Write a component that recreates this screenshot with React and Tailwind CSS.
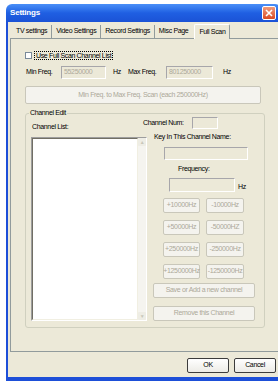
import React from "react";

const TABS = ["TV settings", "Video Settings", "Record Settings", "Misc Page"];

const STEP_BUTTONS = [
  ["+10000Hz", "-10000Hz"],
  ["+50000Hz", "-50000HZ"],
  ["+250000Hz", "-250000Hz"],
  ["+1250000Hz", "-1250000Hz"],
];

const DisabledButton = ({ label, className = "" }) => (
  <div
    className={`flex items-center justify-center rounded-[2px] border border-[#c9c7ba] bg-[#f4f3ee] text-[#aca899] whitespace-nowrap ${className}`}
  >
    {label}
  </div>
);

const SunkenInput = ({ value = "", className = "" }) => (
  <div
    className={`flex items-center border border-t-[#a7a6aa] border-l-[#a7a6aa] border-b-white border-r-white bg-[#ece9d8] pl-[2px] text-[#aca899] ${className}`}
  >
    {value}
  </div>
);

const Tab = ({ label, last }) => (
  <div
    className={`flex h-[13px] items-center px-[4px] ${last ? "" : "border-r border-r-[#919b9c]"}`}
  >
    {label}
  </div>
);

const FullScanPage = () => (
  <div className="ml-[2px] h-[314px] w-[270px] border border-[#919b9c] pl-[14px] pt-[12px]">
    {/* checkbox */}
    <div className="flex h-[8px] items-center">
      <div className="h-[7px] w-[7px] border border-[#7a8a99] bg-white" />
      <span className="ml-[2px] border border-dotted border-black px-[1px] leading-[7px]">
        Use Full Scan Channel List
      </span>
    </div>

    {/* frequency range */}
    <div className="mt-[7px] flex h-[13px] items-center">
      <span className="ml-[1px] w-[35px]">Min Freq.</span>
      <SunkenInput value="55250000" className="h-[13px] w-[45px]" />
      <span className="ml-[7px] w-[15px]">Hz</span>
      <span className="w-[38px]">Max Freq.</span>
      <SunkenInput value="801250000" className="h-[13px] w-[47px]" />
      <span className="ml-[10px]">Hz</span>
    </div>

    <DisabledButton
      label="Min Freq. to Max Freq. Scan (each 250000Hz)"
      className="mt-[7px] h-[18px] w-[236px]"
    />

    {/* channel edit group */}
    <div className="relative mt-[9px] h-[215px] w-[240px] rounded-[3px] border border-[#d0d0bf] pl-[5px] pt-[3px]">
      <span className="absolute left-[3px] top-[-5px] bg-[#ece9d8] px-[1px] leading-[8px]">
        Channel Edit
      </span>
      <div className="flex">
        <div className="w-[116px] pt-[6px]">
          <div className="h-[8px] pl-[1px] leading-[8px]">Channel List:</div>
          <div className="mt-[6px] flex h-[184px] border border-t-[#9d9d9d] border-l-[#9d9d9d] border-b-white border-r-white">
            <div className="flex-1 border border-t-[#716f64] border-l-[#716f64] border-b-[#f1efe2] border-r-[#f1efe2] bg-white" />
            <div className="flex w-[8px] flex-col justify-between bg-[#f5f4ef]">
              <div className="flex h-[8px] items-center justify-center rounded-[1px] bg-[#eeede5] text-[5px] leading-none text-[#c9c7ba]">
                ▲
              </div>
              <div className="flex h-[8px] items-center justify-center rounded-[1px] bg-[#eeede5] text-[5px] leading-none text-[#c9c7ba]">
                ▼
              </div>
            </div>
          </div>
        </div>

        <div className="flex flex-col">
          <div className="ml-[-4px] flex h-[12px] items-center">
            <span className="w-[49px]">Channel Num:</span>
            <SunkenInput className="h-[12px] w-[26px]" />
          </div>
          <div className="ml-[7px] mt-[4px] h-[8px] leading-[8px]">
            Key In This Channel Name:
          </div>
          <SunkenInput className="ml-[17px] mt-[6px] h-[13px] w-[84px]" />
          <div className="ml-[31px] mt-[5px] h-[8px] leading-[8px]">Frequency:</div>
          <div className="ml-[22px] mt-[5px] flex items-end">
            <SunkenInput className="h-[14px] w-[66px]" />
            <span className="ml-[3px] leading-[10px]">Hz</span>
          </div>
          <div className="ml-[16px] mt-[6px] grid grid-cols-[37px_38px] gap-x-[6px] gap-y-[7px]">
            {STEP_BUTTONS.map(([plus, minus]) => (
              <React.Fragment key={plus}>
                <DisabledButton label={plus} className="h-[15px]" />
                <DisabledButton label={minus} className="h-[15px]" />
              </React.Fragment>
            ))}
          </div>
          <DisabledButton
            label="Save or Add a new channel"
            className="ml-[6px] mt-[4px] h-[15px] w-[102px]"
          />
          <DisabledButton
            label="Remove this Channel"
            className="ml-[6px] mt-[8px] h-[15px] w-[102px]"
          />
        </div>
      </div>
    </div>
  </div>
);

export default function App() {
  return (
    <div
      className="h-[381px] w-[278px] overflow-hidden bg-white pl-[6px] pt-[4px] text-[7px] tracking-[-0.35px] text-black"
      style={{ fontFamily: '"Liberation Sans", Arial, sans-serif' }}
    >
      <div className="flex h-[377px] w-[275px] flex-col">
        {/* title bar */}
        <div className="flex h-[18px] items-center justify-between rounded-t-[6px] bg-linear-to-b from-[#4a8ff7] via-[#1f5fe2] to-[#1b52d6] pl-[4px] pr-[5px]">
          <span className="text-[8px] font-bold tracking-[-0.2px] text-white">Settings</span>
          <div className="flex h-[14px] w-[14px] items-center justify-center rounded-[2px] border border-white bg-linear-to-b from-[#f09a7a] to-[#d9481f]">
            <svg width="8" height="8" viewBox="0 0 8 8">
              <path d="M1 1L7 7M7 1L1 7" stroke="white" strokeWidth="1.6" />
            </svg>
          </div>
        </div>

        {/* body */}
        <div className="flex flex-1 flex-col border-b-[4px] border-l-[2px] border-r-[2px] border-[#1d4fd8] bg-[#ece9d8]">
          <div className="ml-[4px] mt-[3px] flex h-[13px] items-end">
            {TABS.map((t, i) => (
              <Tab key={t} label={t} last={i === TABS.length - 1} />
            ))}
            <div className="relative z-10 -mb-px ml-[2px] flex h-[15px] items-center rounded-t-[2px] border border-b-0 border-l-white border-t-white border-r-[#919b9c] bg-[#ece9d8] px-[4px]">
              Full Scan
            </div>
          </div>

          <FullScanPage />

          <div className="mt-[6px] flex justify-end gap-[5px] pr-[3px]">
            <div className="flex h-[15px] w-[42px] items-center justify-center rounded-[2px] border border-[#3c3c3c] bg-linear-to-b from-white to-[#ecebe6]">
              OK
            </div>
            <div className="flex h-[15px] w-[42px] items-center justify-center rounded-[2px] border border-[#3c3c3c] bg-linear-to-b from-white to-[#ecebe6]">
              Cancel
            </div>
          </div>
        </div>
      </div>
    </div>
  );
}
